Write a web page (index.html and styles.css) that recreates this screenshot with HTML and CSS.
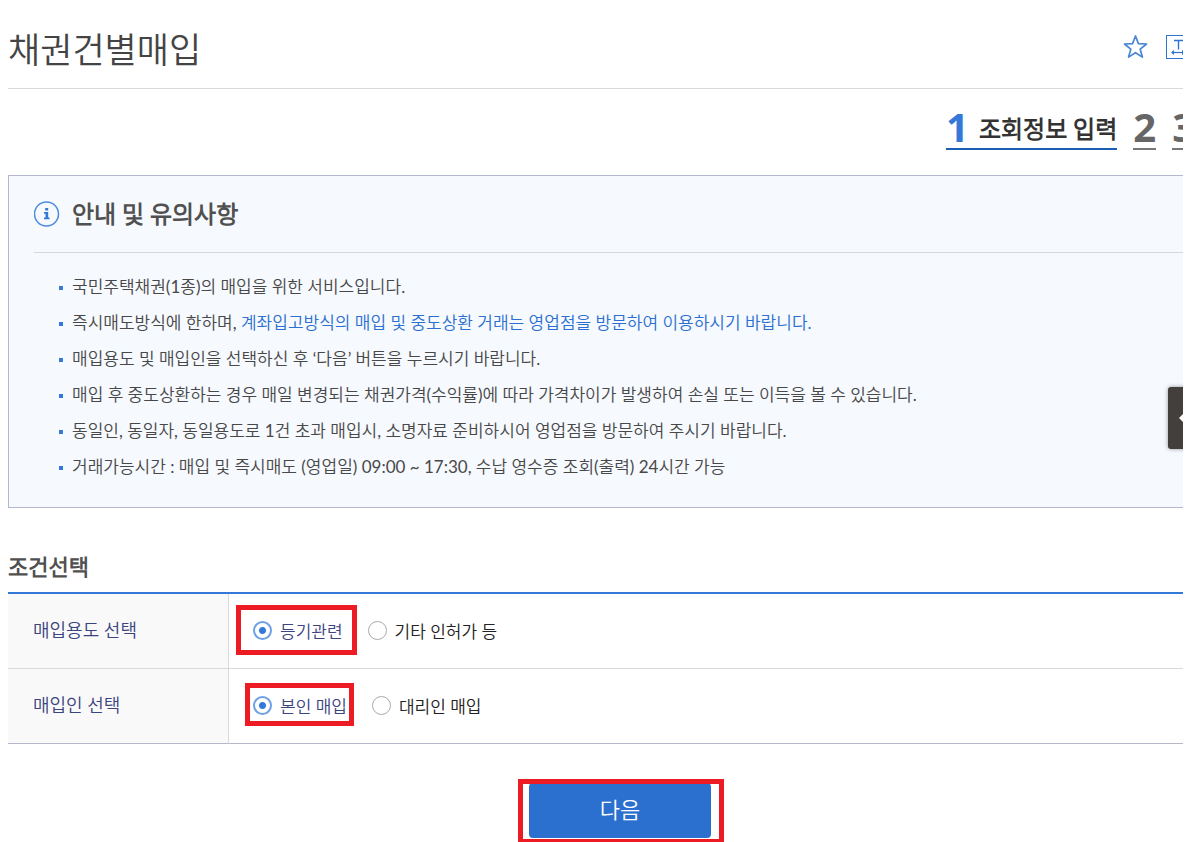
FILE: index.html
```html
<!DOCTYPE html>
<html lang="ko">
<head>
  <meta charset="UTF-8" />
  <title>채권건별매입</title>
  <link rel="stylesheet" href="styles.css">
</head>
<body>
  <div class="wrap">
    <main class="content">

      <header class="page-header">
        <h1>채권건별매입</h1>
        <div class="tools">
          <button type="button" class="tool">
            <svg width="26" height="26" viewBox="0 0 26 26" fill="none" stroke="#4a86d8" stroke-width="1.7" stroke-linejoin="round">
              <path d="M12.500 2l2.900 7.600 8.100.4-6.300 5.200 2.200 7.900-6.900-4.400-6.900 4.400 2.200-7.900L1.500 10l8.100-.4z" />
            </svg>
          </button>
          <button type="button" class="tool">
            <svg width="24" height="24" viewBox="0 0 24 24" fill="none" stroke="#2f74cf">
              <rect x="0.500" y="0.500" width="23" height="23" />
              <path d="M8 5.500h9M12.500 5.500v9" stroke-width="1.400" />
              <path d="M6 17.500h12" stroke-width="1.200" />
              <path d="M5 17.500l3-2.500v5zM19 17.500l-3-2.500v5z" fill="#2f74cf" stroke="none" />
            </svg>
          </button>
        </div>
      </header>

      <ol class="steps">
        <li class="on"><strong>1</strong><span>조회정보 입력</span></li>
        <li><strong>2</strong></li>
        <li><strong>3</strong></li>
      </ol>

      <section class="notice">
        <h2>
          <svg width="26" height="26" viewBox="0 0 26 26" fill="none">
            <circle cx="12.500" cy="13" r="12" stroke="#4c8be0" stroke-width="1.500" />
            <path d="M11.200 7h3v2.500h-3zM10 11h4.200v5.500h1.300v1.800H10v-1.800h1.500v-3.700H10z" fill="#3579d8" />
          </svg>
          <span>안내 및 유의사항</span>
        </h2>
        <ul>
          <li>국민주택채권(1종)의 매입을 위한 서비스입니다.</li>
          <li>즉시매도방식에 한하며, <em>계좌입고방식의 매입 및 중도상환 거래는 영업점을 방문하여 이용하시기 바랍니다.</em></li>
          <li>매입용도 및 매입인을 선택하신 후 ‘다음’ 버튼을 누르시기 바랍니다.</li>
          <li>매입 후 중도상환하는 경우 매일 변경되는 채권가격(수익률)에 따라 가격차이가 발생하여 손실 또는 이득을 볼 수 있습니다.</li>
          <li>동일인, 동일자, 동일용도로 1건 초과 매입시, 소명자료 준비하시어 영업점을 방문하여 주시기 바랍니다.</li>
          <li>거래가능시간 : 매입 및 즉시매도 (영업일) 09:00 ~ 17:30, 수납 영수증 조회(출력) 24시간 가능</li>
        </ul>
      </section>

      <form>
        <h3>조건선택</h3>
        <table class="form-table">
          <tr>
            <th scope="row">매입용도 선택</th>
            <td>
              <div class="radios">
                <span class="radio mark mark-wide">
                  <input type="radio" name="purpose" id="purpose1" checked><label for="purpose1">등기관련</label>
                </span>
                <span class="radio">
                  <input type="radio" name="purpose" id="purpose2"><label for="purpose2">기타 인허가 등</label>
                </span>
              </div>
            </td>
          </tr>
          <tr>
            <th scope="row">매입인 선택</th>
            <td>
              <div class="radios">
                <span class="radio mark mark-tight">
                  <input type="radio" name="buyer" id="buyer1" checked><label for="buyer1">본인 매입</label>
                </span>
                <span class="radio">
                  <input type="radio" name="buyer" id="buyer2"><label for="buyer2">대리인 매입</label>
                </span>
              </div>
            </td>
          </tr>
        </table>

        <div class="btn-area">
          <span class="mark mark-btn"><button type="button" class="btn-next">다음</button></span>
        </div>
      </form>
    </main>

    <button type="button" class="quick-tab">
      <svg width="10" height="14" viewBox="0 0 10 14" fill="none" stroke="#fff" stroke-width="3">
        <path d="M8 1L2 7l6 6" />
      </svg>
    </button>
  </div>
</body>
</html>
```
FILE: styles.css
```css
* {
  box-sizing: border-box;
}
body {
  margin: 0;
  font-family: Lato, "Noto Sans CJK KR DemiLight", "Noto Sans CJK KR", sans-serif;
  font-size: 17px;
  font-weight: 400;
  color: #484848;
  background: #fff;
}
h1, h2, h3, ul, ol {
  margin: 0;
  padding: 0;
}
ul, ol {
  list-style: none;
}
button {
  font-family: inherit;
  border: 0;
  padding: 0;
  cursor: pointer;
}
.wrap {
  position: relative;
  margin: 0 9px 0 8px;
  overflow: hidden;
}
/* runs on past the right edge of the wrap */
.content {
  margin-right: -49px;
}

/* header */
.page-header {
  display: flex;
  justify-content: space-between;
  align-items: flex-start;
  padding: 24px 42px 14px 0;
  border-bottom: 1px solid #d9d9d9;
}
.page-header h1 {
  font-size: 35px;
  font-weight: 400;
  line-height: 50px;
  color: #444;
}
.tools {
  display: flex;
  align-items: center;
  gap: 17px;
  padding-top: 10px;
}
.tool {
  background: none;
}
.tool svg {
  display: block;
}

/* steps */
.steps {
  display: flex;
  justify-content: flex-end;
  gap: 16px;
  padding: 17px 37px 25px 0;
}
.steps li {
  display: flex;
  align-items: center;
  gap: 10px;
  height: 44px;
  border-bottom: 2px solid #777;
  color: #666;
}
.steps strong {
  font-family: "Open Sans", sans-serif;
  font-size: 40px;
  font-weight: 700;
  line-height: 42px;
}
.steps span {
  font-size: 24px;
  font-weight: 700;
  color: #333;
}
.steps .on {
  border-color: #1a5fb4;
}
.steps .on strong {
  color: #3579d8;
}

/* notice */
.notice {
  padding: 0 25px 22px;
  border: 1px solid #b4b8d0;
  background: #f6f9fe;
}
.notice h2 {
  display: flex;
  align-items: center;
  gap: 12px;
  height: 77px;
  border-bottom: 1px solid #d5d7db;
  font-size: 24px;
  font-weight: 700;
  color: #505050;
}
.notice h2 span {
  padding-bottom: 4px;
}
.notice ul {
  padding: 16px 0 0 25px;
}
.notice li {
  position: relative;
  padding-left: 13px;
  line-height: 36px;
}
.notice li::before {
  content: "";
  position: absolute;
  left: 0;
  top: 17px;
  width: 4px;
  height: 4px;
  background: #3579d8;
}
.notice em {
  font-style: normal;
  color: #2b6fd0;
}

/* form */
form h3 {
  margin-top: 43px;
  padding-bottom: 9px;
  font-size: 22px;
  font-weight: 700;
  line-height: 32px;
  color: #505050;
}
.form-table {
  width: 100%;
  border-collapse: separate;
  border-spacing: 0;
  border-top: 2px solid #3579d8;
}
.form-table th,
.form-table td {
  height: 75px;
  padding: 0 24px 2px;
  border-bottom: 1px solid #d9d9d9;
  text-align: left;
}
.form-table th {
  width: 221px;
  padding: 0 0 5px 25px;
  border-right: 1px solid #d9d9d9;
  background: #f9f9f9;
  font-size: 18px;
  font-weight: 400;
  color: #3c4480;
}
.form-table tr:last-child th,
.form-table tr:last-child td {
  border-bottom-color: #b4b8c8;
}
.radios {
  display: flex;
  gap: 25px;
}
.radio {
  display: flex;
  align-items: center;
  gap: 8px;
  color: #222;
}
.radio input {
  appearance: none;
  width: 19px;
  height: 19px;
  margin: 0;
  border: 1px solid #aaa;
  border-radius: 50%;
  background: #fff;
}
.radio input:checked {
  border: 2px solid #6fa0e4;
  background: radial-gradient(circle, #3579d8 3px, #fff 4px);
}
.radio input:checked + label {
  color: #3c4480;
}

/* red marks round the things to press */
.mark {
  position: relative;
}
.mark::after {
  content: "";
  position: absolute;
  border: 5px solid #ed1c24;
  pointer-events: none;
}
.mark-wide::after {
  inset: -13px -14px -12px -17px;
}
.mark-tight::after {
  inset: -10px -7px -8px -8px;
}
.mark-btn::after {
  inset: -4px -13px -6px -11px;
}

.btn-area {
  display: flex;
  justify-content: center;
  padding: 39px 0 4px;
}
.btn-next {
  display: block;
  width: 182px;
  height: 55px;
  padding-bottom: 6px;
  border-radius: 4px;
  background: #2b70cf;
  color: #fff;
  font-size: 22px;
}

/* side tab */
.quick-tab {
  position: absolute;
  right: -12px;
  top: 387px;
  width: 27px;
  height: 62px;
  padding-left: 11px;
  border-radius: 3px;
  background: #433f3c;
  box-shadow: 0 0 4px rgba(0, 0, 0, 0.4);
}
.quick-tab svg {
  display: block;
}
```
